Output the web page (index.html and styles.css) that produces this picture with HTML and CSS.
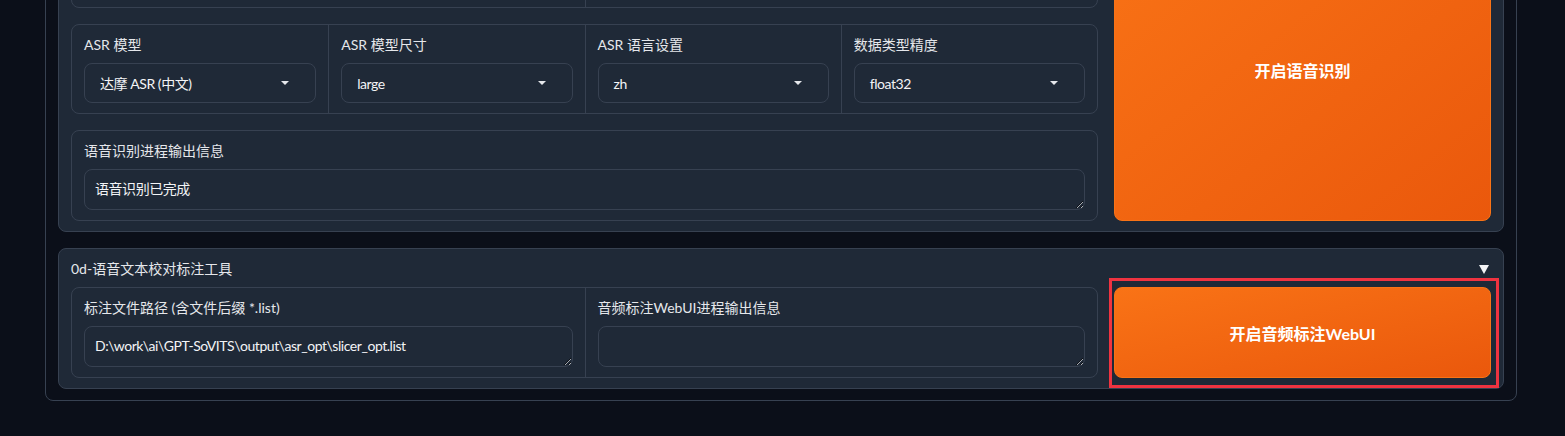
FILE: index.html
```html
<!DOCTYPE html>
<html>
<head>
    <meta charset="utf-8">
    <title>GPT-SoVITS WebUI</title>
    <link rel="stylesheet" href="styles.css">
</head>
<body>
    <div class="panel">
        <div class="group">
            <div class="group-body">
                <div class="col-main">
                    <div class="block cols-2 block-cut">
                        <div class="cell"></div>
                        <div class="cell"></div>
                    </div>
                    <div class="block cols-4">
                        <div class="cell">
                            <label class="lbl">ASR 模型</label>
                            <div class="select"><span>达摩 ASR (中文)</span><i class="caret"></i></div>
                        </div>
                        <div class="cell">
                            <label class="lbl">ASR 模型尺寸</label>
                            <div class="select"><span>large</span><i class="caret"></i></div>
                        </div>
                        <div class="cell">
                            <label class="lbl">ASR 语言设置</label>
                            <div class="select"><span>zh</span><i class="caret"></i></div>
                        </div>
                        <div class="cell">
                            <label class="lbl">数据类型精度</label>
                            <div class="select"><span>float32</span><i class="caret"></i></div>
                        </div>
                    </div>
                    <div class="block">
                        <div class="cell">
                            <label class="lbl">语音识别进程输出信息</label>
                            <textarea class="area" rows="1">语音识别已完成</textarea>
                        </div>
                    </div>
                </div>
                <div class="col-side">
                    <button class="btn-primary">开启语音识别</button>
                </div>
            </div>
        </div>

        <div class="group">
            <div class="group-head">
                <span>0d-语音文本校对标注工具</span>
                <i class="fold"></i>
            </div>
            <div class="group-body">
                <div class="col-main">
                    <div class="block cols-2">
                        <div class="cell">
                            <label class="lbl">标注文件路径 (含文件后缀 *.list)</label>
                            <textarea class="area" rows="1">D:\work\ai\GPT-SoVITS\output\asr_opt\slicer_opt.list</textarea>
                        </div>
                        <div class="cell">
                            <label class="lbl">音频标注WebUI进程输出信息</label>
                            <textarea class="area" rows="1"></textarea>
                        </div>
                    </div>
                </div>
                <div class="col-side">
                    <div class="marked">
                        <button class="btn-primary">开启音频标注WebUI</button>
                        <span class="mark"></span>
                    </div>
                </div>
            </div>
        </div>
    </div>
</body>
</html>
```

FILE: styles.css
```css
html, body {
    height: 436px;
    overflow: hidden;
}
body {
    margin: 0;
    padding: 0;
    background: #0b0f19;
    color: #f3f4f6;
    font-family: Lato, "Noto Sans CJK SC", sans-serif;
    font-size: 14px;
}
.panel {
    width: 1472px;
    box-sizing: border-box;
    margin: -108px 0 0 45px;
    padding: 12px 12px 11px;
    border: 1px solid #374151;
    border-radius: 8px;
    display: flex;
    flex-direction: column;
    gap: 16px;
}
.group {
    background: #1f2937;
    border: 1px solid #374151;
    border-radius: 8px;
    padding: 12px 12px 10px;
}
.group-head {
    display: flex;
    justify-content: space-between;
    align-items: center;
    height: 20px;
    line-height: 20px;
    margin: -2px 0 8px;
    color: #e5e7eb;
}
.fold {
    width: 0;
    height: 0;
    border-left: 5px solid transparent;
    border-right: 5px solid transparent;
    border-top: 9px solid #f3f4f6;
    margin-right: 2px;
}
.group-body {
    display: flex;
    gap: 16px;
}
.col-main {
    width: 1027px;
    display: flex;
    flex-direction: column;
    gap: 16px;
}
.col-side {
    flex: 1;
    display: flex;
}
.block {
    border: 1px solid #374151;
    border-radius: 8px;
    display: grid;
}
.block-cut {
    height: 88px;
}
.cols-2 {
    grid-template-columns: 1fr 1fr;
}
.cols-4 {
    grid-template-columns: 1fr 1fr 1fr 1fr;
}
.cell {
    padding: 10px 12px;
    min-width: 0;
}
.cell + .cell {
    border-left: 1px solid #374151;
}
.lbl {
    display: block;
    line-height: 20px;
    margin-bottom: 8px;
    color: #e5e7eb;
}
.select {
    height: 40px;
    box-sizing: border-box;
    border: 1px solid #374151;
    border-radius: 8px;
    padding: 0 26px 0 15px;
    display: flex;
    align-items: center;
    justify-content: space-between;
    letter-spacing: -0.45px;
}
.caret {
    width: 0;
    height: 0;
    border-left: 4px solid transparent;
    border-right: 4px solid transparent;
    border-top: 4px solid #e5e7eb;
}
.area {
    display: block;
    width: 100%;
    height: 41px;
    box-sizing: border-box;
    margin: 0;
    padding: 9px 10px;
    background: #1f2937;
    color: #f3f4f6;
    border: 1px solid #374151;
    border-radius: 8px;
    font-family: inherit;
    font-size: 14px;
    line-height: 20px;
    letter-spacing: -0.45px;
    resize: vertical;
    outline: none;
}
.btn-primary {
    flex: 1;
    width: 100%;
    border: 1px solid #f97316;
    border-radius: 8px;
    background: linear-gradient(to bottom right, #f97316, #ea580c);
    color: #ffffff;
    font-family: inherit;
    font-size: 16px;
    font-weight: bold;
    cursor: pointer;
}
.marked {
    flex: 1;
    display: flex;
    position: relative;
}
.mark {
    position: absolute;
    top: -9px;
    right: -8px;
    bottom: -10px;
    left: -5px;
    border: 3px solid #ef3340;
    pointer-events: none;
}
```
